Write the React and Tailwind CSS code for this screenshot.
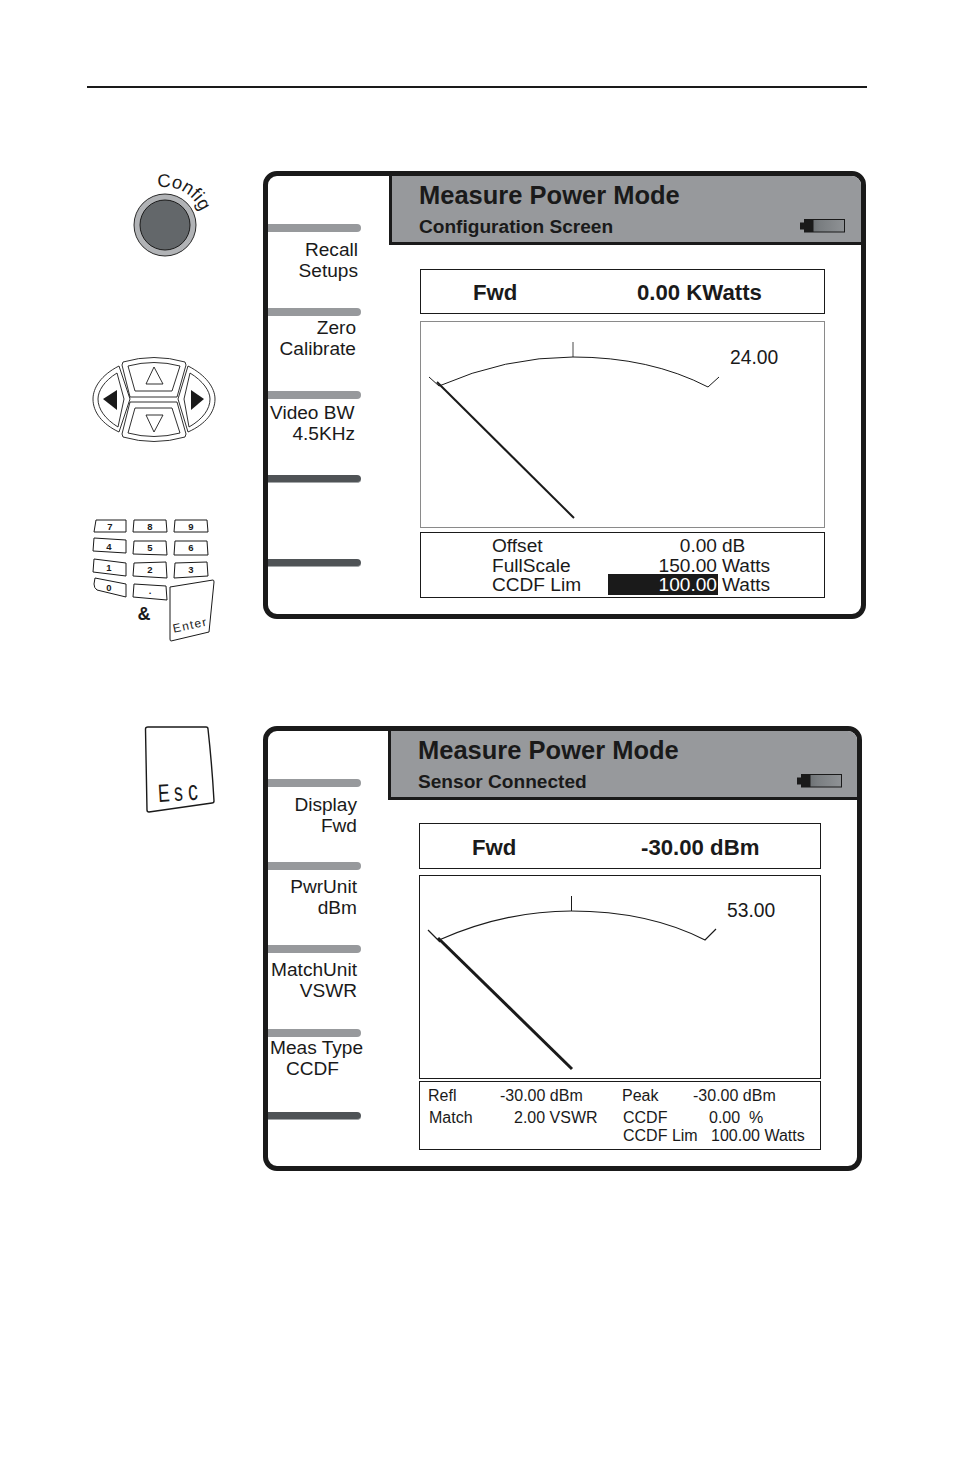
const FONT = "font-['Liberation_Sans',Arial,sans-serif]";

function ConfigKnob() {
  return (
    <svg className="block ml-[41px]" width="90" height="90" viewBox="128 168 90 90">
      <circle cx="165" cy="225" r="31" fill="#b1b3b6" stroke="#2a2a2a" strokeWidth="1" />
      <circle cx="165" cy="225" r="25" fill="#63676a" stroke="#1a1a1a" strokeWidth="1" />
      <path id="cfgarc" d="M127 225 A38 38 0 0 1 203 225" fill="none" />
      <text fontFamily="Liberation Sans" fontSize="18.5" fill="#1a1a1a">
        <textPath href="#cfgarc" startOffset="52">Config</textPath>
      </text>
    </svg>
  );
}

function NavPad() {
  const up = "M123 362 Q154 353 185 362 L186 365 L177 397 L130 397 L122 365 Z";
  const upIn = "M128 366 Q154 359 180 366 L172 391 L135 391 Z";
  const down = "M123 437 Q154 446 185 437 L186 434 L177 402 L130 402 L122 434 Z";
  const downIn = "M128 433 Q154 440 180 433 L172 408 L135 408 Z";
  return (
    <svg className="block ml-[1px] mt-[94px]" width="130" height="96" viewBox="88 352 130 96">
      <g fill="none" stroke="#1a1a1a" strokeWidth="0.9">
        <path d={up} /><path d={upIn} />
        <path d={down} /><path d={downIn} />
        <path d="M119 366 C101 375 93 388 93 399 C93 412 102 424 119 432 L130 399 Z" />
        <path d="M117 373 C104 381 98 391 98 399 C98 409 105 419 118 427 L124 399 Z" />
        <path d="M188 366 C206 375 215 388 215 399 C215 412 206 424 188 432 L178 399 Z" />
        <path d="M190 373 C203 381 210 391 210 399 C210 409 203 419 189 427 L184 399 Z" />
        <path d="M154 367 L146 384 L163 384 Z" />
        <path d="M154 432 L146 415 L163 415 Z" />
      </g>
      <path d="M103 399 L117 390 L117 410 Z" fill="#1a1a1a" />
      <path d="M204 399 L191 390 L191 410 Z" fill="#1a1a1a" />
    </svg>
  );
}

function Key({ d, label, x, y }) {
  return (
    <g>
      <path d={d} fill="none" stroke="#1a1a1a" strokeWidth="1" strokeLinejoin="round" />
      <text x={x} y={y} textAnchor="middle" fontFamily="Liberation Sans" fontWeight="700" fontSize="9.500" fill="#1a1a1a">{label}</text>
    </g>
  );
}

function Keypad() {
  return (
    <svg className="block ml-[1px] mt-[68px]" width="130" height="128" viewBox="88 516 130 128">
      <Key d="M96 520 L126 520 L126 532 L94 532 Z" label="7" x="110" y="530" />
      <Key d="M134 520 L166 520 L167 532 L133 532 Z" label="8" x="150" y="530" />
      <Key d="M175 520 L207 520 L208 532 L174 532 Z" label="9" x="191" y="530" />
      <Key d="M94 538 L126 540 L126 553 L93 551 Z" label="4" x="109" y="550" />
      <Key d="M134 541 L166 541 L167 555 L133 554 Z" label="5" x="150" y="551" />
      <Key d="M175 541 L207 541 L208 555 L174 555 Z" label="6" x="191" y="551" />
      <Key d="M94 559 L126 563 L126 576 L93 572 Z" label="1" x="109" y="571" />
      <Key d="M134 563 L166 562 L167 578 L133 576 Z" label="2" x="150" y="573" />
      <Key d="M175 563 L207 562 L208 576 L174 578 Z" label="3" x="191" y="573" />
      <Key d="M95 578 L126 584 L126 597 L97 590 Q94 588 94 584 Z" label="0" x="109" y="591" />
      <Key d="M134 584 L166 586 L167 600 L133 597 Z" label="." x="150" y="594" />
      <path d="M170 587 L213 580 Q214 580 214 582 L209 632 L171 641 Q170 641 170 639 Z" fill="none" stroke="#1a1a1a" strokeWidth="1" />
      <text x="0" y="0" transform="translate(191 629) rotate(-12)" textAnchor="middle" fontFamily="Liberation Sans" fontSize="12" letterSpacing="1.300" fill="#1a1a1a">Enter</text>
      <text x="144" y="620" textAnchor="middle" fontFamily="Liberation Sans" fontWeight="700" fontSize="18" fill="#1a1a1a">&amp;</text>
    </svg>
  );
}

function EscKey() {
  return (
    <svg className="block ml-[53px]" width="80" height="92" viewBox="140 723 80 92">
      <path d="M148 727 L206 727 Q208 727 208 729 Q212 765 214 801 Q214 803 212 803 L149 812 Q147 812 147 810 L145.500 729 Q145.500 727 148 727 Z" fill="none" stroke="#1a1a1a" strokeWidth="1.400" />
      <text transform="translate(158.500 802) rotate(-3.500) scale(0.7 1)" fontFamily="Liberation Sans" fontSize="25" fill="#1a1a1a">
        <tspan x="0" y="0">E</tspan>
        <tspan x="23" y="0">s</tspan>
        <tspan x="43" y="0" fontSize="28">c</tspan>
      </text>
    </svg>
  );
}

function Battery({ id }) {
  return (
    <svg className="block mb-[2px]" width="46" height="14" viewBox="0 0 46 14">
      <defs>
        <linearGradient id={id} x1="0" x2="1" y1="0" y2="0">
          <stop offset="0" stopColor="#5f6467" />
          <stop offset="0.400" stopColor="#7a7e81" />
          <stop offset="1" stopColor="#8f9295" />
        </linearGradient>
      </defs>
      <rect x="0" y="3.500" width="5" height="7" fill="#1a1a1a" />
      <rect x="4.500" y="0.500" width="40" height="12.500" fill={`url(#${id})`} stroke="#1a1a1a" />
      <rect x="4.500" y="0.500" width="9" height="12.500" fill="#1a1a1a" />
    </svg>
  );
}

function SoftKey({ lines, dark, textTop, textRight, pitch }) {
  return (
    <div className={pitch}>
      <div className={`w-[93px] rounded-r-full ${dark ? "h-[8px] bg-[#4f5356] border-b border-[#a3a6a8]" : "h-[8px] bg-[#97999c]"}`} />
      <div className={`${textTop} ${textRight} w-[90px] text-[19.100px] leading-[21px] text-[#1a1a1a]`}>
        {lines.map((l, i) => (
          <div key={i} className={`whitespace-nowrap ${l.cls}`}>{l.t}</div>
        ))}
      </div>
    </div>
  );
}

function Screen({ w, h, headW, title, sub, keys, children, batteryId, pitch }) {
  return (
    <div className={`mt-[3px] ${w} ${h} border-[5px] border-[#1a1a1a] rounded-[14px] flex overflow-hidden`}>
      <div className={`${headW} shrink-0 pt-[48px]`}>
        {keys.map((k, i) => <SoftKey key={i} lines={k.lines} dark={k.dark} textTop={k.top} textRight={k.pr} pitch={pitch} />)}
      </div>
      <div className="flex-1 flex flex-col">
        <div className="h-[69px] shrink-0 bg-[#97999c] border-l-[3px] border-b-[3px] border-[#1a1a1a] pl-[27px] text-[#1a1a1a] font-bold">
          <div className="mt-[4px] text-[25.500px] leading-[30px]">{title}</div>
          <div className="mt-[6px] flex items-center justify-between text-[19.100px] leading-[22px] pr-[15px]">
            <span>{sub}</span>
            <Battery id={batteryId} />
          </div>
        </div>
        {children}
      </div>
    </div>
  );
}

function Gauge1() {
  return (
    <svg className="block" width="403" height="205" viewBox="421 322 403 205">
      <g fill="none" stroke="#1a1a1a">
        <path d="M439 386 Q505 357 573 357 Q650 357 708 387 L719 377" strokeWidth="1" />
        <path d="M429 377 L439 386" strokeWidth="1" />
        <path d="M573 342 L573 357" strokeWidth="0.800" />
        <path d="M437 382 L574 518" strokeWidth="2" />
      </g>
    </svg>
  );
}

function Gauge2() {
  return (
    <svg className="block" width="400" height="202" viewBox="420 876 400 202">
      <g fill="none" stroke="#1a1a1a">
        <path d="M439 940 Q505 911 571 911 Q648 911 705 940 L716 929" strokeWidth="1.200" />
        <path d="M428 930 L440 942" strokeWidth="1.200" />
        <path d="M571.500 896 L571.500 911" strokeWidth="1" />
        <path d="M438 938 L572 1069" strokeWidth="3" />
      </g>
    </svg>
  );
}

const keys1 = [
  { top: "mt-[7px]", pr: "pr-0", lines: [{ t: "Recall", cls: "text-right" }, { t: "Setups", cls: "text-right" }] },
  { top: "mt-[1px]", pr: "pr-0", lines: [{ t: "Zero", cls: "text-right pr-[2px]" }, { t: "Calibrate", cls: "text-right pr-[2px]" }] },
  { top: "mt-[3px]", pr: "pr-0", lines: [{ t: "Video BW", cls: "pl-[2px]" }, { t: "4.5KHz", cls: "text-right pr-[3px]" }] },
  { lines: [], dark: true },
  { lines: [], dark: true },
];

const keys2 = [
  { top: "mt-[7px]", pr: "pr-[1px]", lines: [{ t: "Display", cls: "text-right" }, { t: "Fwd", cls: "text-right" }] },
  { top: "mt-[6px]", pr: "pr-[1px]", lines: [{ t: "PwrUnit", cls: "text-right" }, { t: "dBm", cls: "text-right" }] },
  { top: "mt-[6px]", pr: "pr-[1px]", lines: [{ t: "MatchUnit", cls: "text-right" }, { t: "VSWR", cls: "text-right" }] },
  { top: "mt-0", pr: "pr-0", lines: [{ t: "Meas Type", cls: "pl-[2px]" }, { t: "CCDF", cls: "pl-[18px]" }] },
  { lines: [], dark: true },
];

export default function App() {
  return (
    <div className={`w-[954px] h-[1474px] bg-white pt-[86px] text-[#1a1a1a] ${FONT}`}>
      <div className="ml-[87px] w-[780px] h-[2px] bg-[#1a1a1a]" />

      <div className="flex items-start ml-[87px] mt-[80px]">
        <div className="w-[176px] shrink-0">
          <ConfigKnob />
          <NavPad />
          <Keypad />
        </div>
        <Screen w="w-[603px]" h="h-[448px]" headW="w-[121px]" title="Measure Power Mode" sub="Configuration Screen" keys={keys1} batteryId="batt1" pitch="h-[83.700px]">
          <div className="pl-[31px] pr-[36px] pt-[24px] flex flex-col">
            <div className="h-[45px] pt-[3px] border border-[#1a1a1a] flex items-center text-[22.200px] font-bold">
              <span className="ml-[52px] w-[164px]">Fwd</span>
              <span>0.00 KWatts</span>
            </div>
            <div className="relative mt-[7px] h-[207px] border border-[#8a8a8a]">
              <Gauge1 />
              <span className="absolute left-[309px] top-[25px] text-[19.300px] leading-[22px]">24.00</span>
            </div>
            <div className="mt-[4px] h-[66px] pt-[3px] border border-[#1a1a1a] text-[19.100px] leading-[20px]">
              <div className="flex h-[20px] pl-[71px]">
                <span className="w-[116px]">Offset</span>
                <span className="w-[110px] pr-[1px] text-right">0.00</span>
                <span className="ml-[4px]">dB</span>
              </div>
              <div className="flex h-[19px] pl-[71px]">
                <span className="w-[116px]">FullScale</span>
                <span className="w-[110px] pr-[1px] text-right">150.00</span>
                <span className="ml-[4px]">Watts</span>
              </div>
              <div className="flex h-[20px] pl-[71px]">
                <span className="w-[116px]">CCDF Lim</span>
                <span className="w-[110px] h-[21px] -mt-[1px] pt-[1px] pr-[1px] text-right bg-[#1a1a1a] text-white">100.00</span>
                <span className="ml-[4px]">Watts</span>
              </div>
            </div>
          </div>
        </Screen>
      </div>

      <div className="flex items-start ml-[87px] mt-[79px]">
        <div className="w-[176px] shrink-0">
          <EscKey />
        </div>
        <Screen w="w-[599px]" h="h-[445px]" headW="w-[120px]" title="Measure Power Mode" sub="Sensor Connected" keys={keys2} batteryId="batt2" pitch="h-[83.200px]">
          <div className="pl-[31px] pr-[37px] pt-[23px] flex flex-col">
            <div className="h-[46px] pt-[3px] border border-[#1a1a1a] flex items-center text-[22.200px] font-bold">
              <span className="ml-[52px] w-[169px]">Fwd</span>
              <span>-30.00 dBm</span>
            </div>
            <div className="relative mt-[6px] h-[204px] border border-[#1a1a1a]">
              <Gauge2 />
              <span className="absolute left-[307px] top-[24px] text-[19.300px] leading-[22px]">53.00</span>
            </div>
            <div className="mt-[2px] h-[69px] border border-[#1a1a1a] text-[16px] leading-[19px] pt-[4px]">
              <div className="flex h-[22px] pl-[8px]">
                <span className="w-[72px]">Refl</span>
                <span className="w-[122px]">-30.00 dBm</span>
                <span className="w-[71px]">Peak</span>
                <span>-30.00 dBm</span>
              </div>
              <div className="flex h-[18px] pl-[9px]">
                <span className="w-[85px]">Match</span>
                <span className="w-[109px]">2.00 VSWR</span>
                <span className="w-[86px]">CCDF</span>
                <span className="whitespace-pre">0.00  %</span>
              </div>
              <div className="flex h-[19px] pl-[203px]">
                <span className="w-[88px]">CCDF Lim</span>
                <span>100.00 Watts</span>
              </div>
            </div>
          </div>
        </Screen>
      </div>
    </div>
  );
}
